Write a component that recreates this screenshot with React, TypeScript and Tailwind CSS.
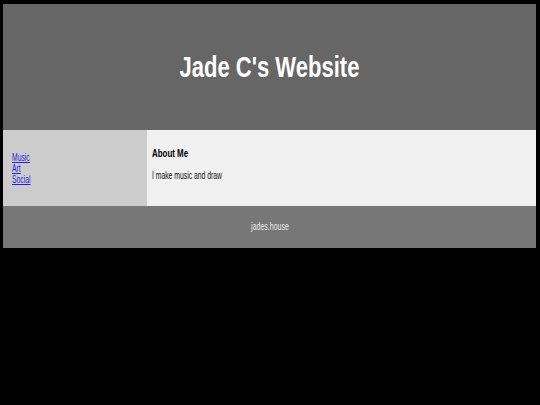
export default function App() {
  return (
    <div className="h-[405px] w-[540px] bg-black pt-[4px] pl-[3px]" style={{ fontFamily: '"Liberation Sans", Arial, sans-serif' }}>
      <div className="w-[533px] flex flex-col">
        <header className="h-[126px] bg-[#666666] flex items-center justify-center">
          <h1 className="inline-block text-[29px] font-bold text-white leading-none m-0 scale-x-[0.76] origin-center whitespace-nowrap">Jade C's Website</h1>
        </header>
        <div className="flex h-[76px]">
          <nav className="w-[144px] bg-[#cccccc] flex flex-col items-start justify-center pl-[9px] pt-[1px]">
            <a href="#" className="inline-block text-[10px] leading-[11px] text-[#1f1fe0] underline scale-x-[0.68] origin-left">Music</a>
            <a href="#" className="inline-block text-[10px] leading-[11px] text-[#1f1fe0] underline scale-x-[0.68] origin-left">Art</a>
            <a href="#" className="inline-block text-[10px] leading-[11px] text-[#1f1fe0] underline scale-x-[0.68] origin-left">Social</a>
          </nav>
          <main className="flex-1 bg-[#f0f0f0] pl-[5px] pt-[17px] flex flex-col items-start">
            <h2 className="inline-block text-[11px] font-bold text-black leading-[12px] scale-x-[0.72] origin-left whitespace-nowrap">About Me</h2>
            <p className="inline-block text-[10px] text-[#111] leading-[12px] mt-[11px] scale-x-[0.68] origin-left whitespace-nowrap">I make music and draw</p>
          </main>
        </div>
        <footer className="h-[42px] bg-[#777777] flex items-center justify-center">
          <span className="inline-block text-[10px] text-[#e8e8e8] leading-none scale-x-[0.7] origin-center whitespace-nowrap">jades.house</span>
        </footer>
      </div>
    </div>
  );
}
